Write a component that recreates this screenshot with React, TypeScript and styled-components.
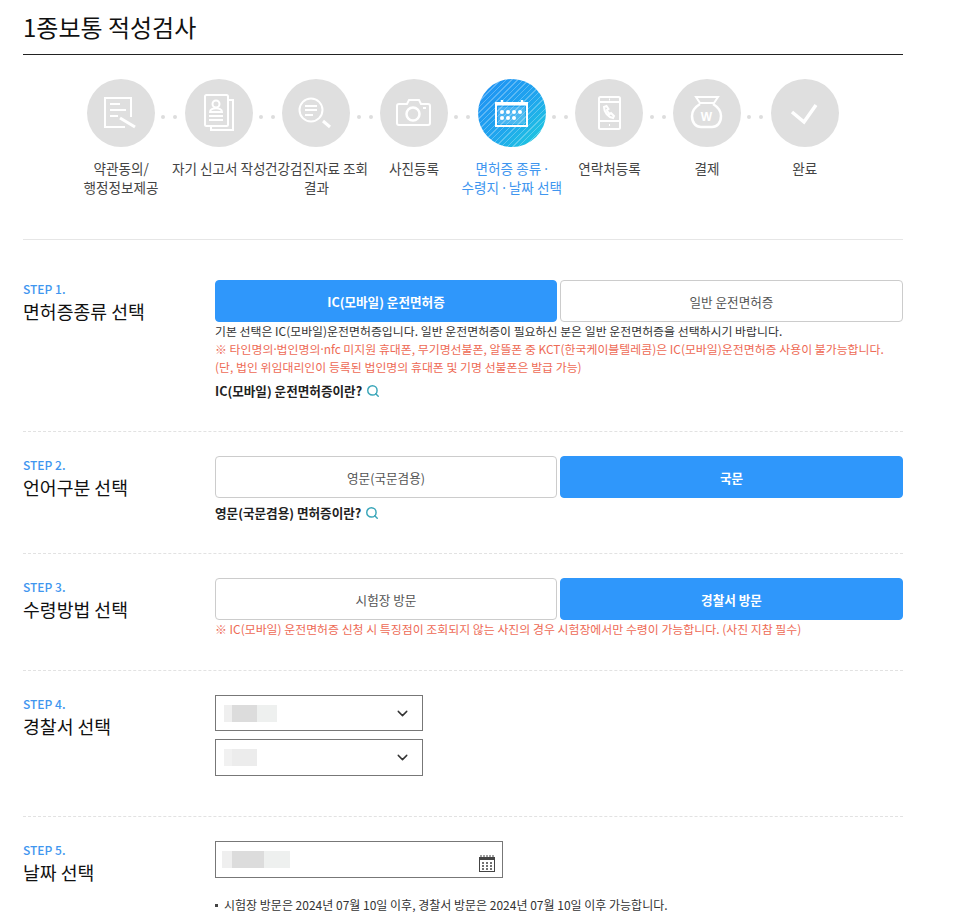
import { FC, ReactNode } from 'react';
import styled, { createGlobalStyle } from 'styled-components';
import { ChevronDown, Search } from 'lucide-react';

const GlobalStyle = createGlobalStyle`
  html, body {
    margin: 0;
    padding: 0;
    background: #fff;
    font-family: "Noto Sans CJK KR", "Noto Sans", sans-serif;
    color: #333;
  }
  * { box-sizing: border-box; }
`;

const Page = styled.div`
  width: 953px;
  height: 916px;
  overflow: hidden;
  padding: 0 50px 0 23px;
`;
const Title = styled.h1`
  margin: 0;
  height: 55px;
  padding-top: 9px;
  font-size: 24px;
  line-height: 36px;
  font-weight: 400;
  color: #111;
  border-bottom: 1px solid #222;
`;
const StepList = styled.ul`
  display: flex;
  list-style: none;
  margin: 0;
  padding: 24px 0 0 49.3px;
  height: 185px;
  border-bottom: 1px solid #e6e6e6;
`;
const StepItem = styled.li<{ $last?: boolean }>`
  position: relative;
  width: 97.67px;
  flex: none;
  display: flex;
  flex-direction: column;
  align-items: center;
  &::after {
    content: '';
    display: ${(p) => (p.$last ? 'none' : 'block')};
    position: absolute;
    left: 89px;
    top: 36px;
    width: 4px;
    height: 4px;
    border-radius: 50%;
    background: #ddd;
    box-shadow: 12px 0 0 #ddd;
  }
`;
const Circle = styled.div<{ $active?: boolean }>`
  width: 68px;
  height: 68px;
  border-radius: 50%;
  flex: none;
  background: ${(p) =>
    p.$active
      ? `repeating-linear-gradient(135deg, rgba(255,255,255,0.28) 0 1px, transparent 1px 4px),
         linear-gradient(135deg, #1f8ff5 0%, #1fa5ee 55%, #1fd0dc 100%)`
      : '#dfdfdf'};
`;
const StepLabel = styled.div<{ $active?: boolean }>`
  margin-top: 12px;
  width: 130px;
  flex: none;
  text-align: center;
  font-size: 13.6px;
  line-height: 19px;
  white-space: pre;
  color: ${(p) => (p.$active ? '#3f96ef' : '#444')};
`;
const Mid = styled.span`
  font-family: "Noto Sans", sans-serif;
`;
const Section = styled.section<{ $top?: number; $last?: boolean }>`
  display: flex;
  padding: ${(p) => p.$top ?? 24}px 0 0;
  border-bottom: ${(p) => (p.$last ? 'none' : '1px dashed #e2e2e2')};
`;
const Head = styled.div`
  width: 192px;
  flex: none;
`;
const StepNo = styled.div`
  font-size: 12px;
  line-height: 18px;
  font-weight: 500;
  color: #3f96ef;
`;
const StepName = styled.div`
  font-size: 18.3px;
  line-height: 26px;
  color: #111;
`;
const Body = styled.div<{ $height: number }>`
  width: 688px;
  height: ${(p) => p.$height}px;
`;
const ButtonRow = styled.div`
  display: grid;
  grid-template-columns: 342px 343px;
  gap: 3px;
`;
const Choice = styled.button<{ $on?: boolean }>`
  height: 42px;
  padding: 0;
  border-radius: 4px;
  font-family: inherit;
  font-size: 12.6px;
  font-weight: ${(p) => (p.$on ? 700 : 400)};
  color: ${(p) => (p.$on ? '#fff' : '#555')};
  background: ${(p) => (p.$on ? '#2f97fb' : '#fff')};
  border: 1px solid ${(p) => (p.$on ? '#2f97fb' : '#ccc')};
`;
const Note = styled.p<{ $red?: boolean }>`
  margin: 0;
  font-size: 11.92px;
  line-height: 18px;
  white-space: nowrap;
  color: ${(p) => (p.$red ? '#ee6a55' : '#333')};
`;
const InfoLink = styled.div`
  display: flex;
  align-items: center;
  gap: 4px;
  margin-top: 6px;
  font-size: 12.6px;
  line-height: 18px;
  font-weight: 700;
  color: #222;
  svg { color: #3aa6b9; }
`;
const SelectBox = styled.div<{ $w: number; $h: number; $left: number; $right: number }>`
  display: flex;
  align-items: center;
  justify-content: space-between;
  width: ${(p) => p.$w}px;
  height: ${(p) => p.$h}px;
  margin-bottom: 8px;
  padding: 0 ${(p) => p.$right}px 0 ${(p) => p.$left}px;
  border: 1px solid #777;
  background: #fff;
  color: #333;
`;
const Blur = styled.span<{ $w: number; $light?: boolean }>`
  display: block;
  width: ${(p) => p.$w}px;
  height: 17px;
  background: ${(p) =>
    p.$light
      ? 'linear-gradient(90deg, #f1f1f1 0 24%, #ececec 24% 100%)'
      : 'linear-gradient(90deg, #efefef 0 15%, #dcdcdc 15% 62%, #eef0ef 62% 100%)'};
`;
const BulletLine = styled.div`
  display: flex;
  align-items: center;
  gap: 6px;
  margin-top: 18px;
  font-size: 12px;
  line-height: 18px;
  color: #333;
  white-space: nowrap;
  &::before {
    content: '';
    width: 3px;
    height: 3px;
    background: #444;
  }
`;
const CalendarSvg = styled.svg`
  margin-top: 8px;
`;
const BagWon = styled.text`
  font-family: "Liberation Sans", sans-serif;
  font-size: 12px;
  font-weight: 700;
  fill: #fff;
  stroke: none;
`;

const Glyph: FC<{ children: ReactNode }> = ({ children }) => (
  <svg width="68" height="68" viewBox="0 0 68 68" fill="none" stroke="#fff" strokeWidth="2">
    {children}
  </svg>
);

const icons: ReactNode[] = [
  <Glyph key="terms">
    <path d="M44 38V19H18v29h20" />
    <path d="M23 25h10M23 31h16M23 37h8" />
    <path d="M33 39l15 9" strokeWidth="3" />
  </Glyph>,
  <Glyph key="report">
    <rect x="20" y="16" width="23" height="31" rx="1.500" />
    <path d="M43 21h5v30H26v-4" />
    <circle cx="31" cy="25" r="3.500" />
    <path d="M25 33c0-5 12-5 12 0zM24 37h14M24 41h14" />
  </Glyph>,
  <Glyph key="health">
    <circle cx="29" cy="31" r="11.500" />
    <path d="M23 27h12M23 31h12M23 36h8" />
    <path d="M41 42l7 6" strokeWidth="3" />
  </Glyph>,
  <Glyph key="photo">
    <path d="M19 25h8l2-4h10l2 4h7a2 2 0 0 1 2 2v17a2 2 0 0 1-2 2H19a2 2 0 0 1-2-2V27a2 2 0 0 1 2-2z" />
    <circle cx="33" cy="35" r="6.5" strokeWidth="2.5" />
    <path d="M43 29h3" />
  </Glyph>,
  <Glyph key="calendar">
    <rect x="18" y="24" width="31" height="23" />
    <path d="M17 25h33" strokeWidth="3" />
    <path d="M24 21v3M44 21v3" strokeWidth="2.5" />
    <rect x="20" y="28" width="27" height="17" fill="#fff" fillOpacity="0.2" stroke="none" />
    <g fill="#fff" stroke="none">
      {[24, 30, 36, 42].map((x) => (
        <circle key={`a${x}`} cx={x} cy="33" r="2" />
      ))}
      {[24, 30, 36].map((x) => (
        <circle key={`b${x}`} cx={x} cy="39" r="2" />
      ))}
    </g>
  </Glyph>,
  <Glyph key="phone">
    <rect x="24" y="18" width="21" height="32" rx="1.5" />
    <path d="M24 23h21M24 42h21" />
    <path d="M34 20.500h1M34 46h1" />
    <path d="M29 28c0 5 4 10 9 11l1-2-3-3-1.500 1c-1-1-2-2-2.500-4l1.500-1-2-3z" />
  </Glyph>,
  <Glyph key="pay">
    <path d="M23 18h22l-4 6H27z" />
    <path d="M27 25c-5 3-8 7-8 12 0 7 4 11 9 11h11c5 0 9-4 9-11 0-5-3-9-8-12" strokeWidth="2.5" />
    <BagWon x="33.500" y="41.500" textAnchor="middle">
      W
    </BagWon>
  </Glyph>,
  <Glyph key="done">
    <path d="M21 33l12 10 12-17" strokeWidth="3.500" />
  </Glyph>,
];

const steps: ReactNode[] = [
  '약관동의/\n행정정보제공',
  '자기 신고서 작성',
  '건강검진자료 조회\n결과',
  '사진등록',
  <>
    면허증 종류 <Mid>·</Mid>
    {'\n'}수령지 <Mid>·</Mid> 날짜 선택
  </>,
  '연락처등록',
  '결제',
  '완료',
];

const CalendarMark: FC = () => (
  <CalendarSvg width="18" height="17" viewBox="0 0 18 17">
    <path d="M1 2h16v3H1z" fill="#444" />
    <path d="M3 0v3M6 0v3M9 0v3M12 0v3M15 0v3" stroke="#444" />
    <rect x="1.500" y="4.500" width="15" height="12" fill="none" stroke="#444" />
    <path d="M4 8h2M8 8h2M12 8h2M4 11h2M8 11h2M12 11h2M4 14h2M8 14h2M12 14h2" stroke="#444" strokeWidth="1.500" />
  </CalendarSvg>
);

const App: FC = () => (
  <Page>
    <GlobalStyle />
    <Title>1종보통 적성검사</Title>
    <StepList>
      {steps.map((label, i) => (
        <StepItem key={i} $last={i === steps.length - 1}>
          <Circle $active={i === 4}>{icons[i]}</Circle>
          <StepLabel $active={i === 4}>{label}</StepLabel>
        </StepItem>
      ))}
    </StepList>

    <Section $top={40}>
      <Head>
        <StepNo>STEP 1.</StepNo>
        <StepName>면허증종류 선택</StepName>
      </Head>
      <Body $height={151}>
        <ButtonRow>
          <Choice $on>IC(모바일) 운전면허증</Choice>
          <Choice>일반 운전면허증</Choice>
        </ButtonRow>
        <Note>기본 선택은 IC(모바일)운전면허증입니다. 일반 운전면허증이 필요하신 분은 일반 운전면허증을 선택하시기 바랍니다.</Note>
        <Note $red>
          ※ 타인명의<Mid>·</Mid>법인명의<Mid>·</Mid>nfc 미지원 휴대폰, 무기명선불폰, 알뜰폰 중 KCT(한국케이블텔레콤)은 IC(모바일)운전면허증 사용이 불가능합니다.
        </Note>
        <Note $red>(단, 법인 위임대리인이 등록된 법인명의 휴대폰 및 기명 선불폰은 발급 가능)</Note>
        <InfoLink>
          IC(모바일) 운전면허증이란?
          <Search size={14} strokeWidth={2.5} />
        </InfoLink>
      </Body>
    </Section>

    <Section>
      <Head>
        <StepNo>STEP 2.</StepNo>
        <StepName>언어구분 선택</StepName>
      </Head>
      <Body $height={97}>
        <ButtonRow>
          <Choice>영문(국문겸용)</Choice>
          <Choice $on>국문</Choice>
        </ButtonRow>
        <InfoLink>
          영문(국문겸용) 면허증이란?
          <Search size={14} strokeWidth={2.5} />
        </InfoLink>
      </Body>
    </Section>

    <Section>
      <Head>
        <StepNo>STEP 3.</StepNo>
        <StepName>수령방법 선택</StepName>
      </Head>
      <Body $height={92}>
        <ButtonRow>
          <Choice>시험장 방문</Choice>
          <Choice $on>경찰서 방문</Choice>
        </ButtonRow>
        <Note $red>※ IC(모바일) 운전면허증 신청 시 특징점이 조회되지 않는 사진의 경우 시험장에서만 수령이 가능합니다. (사진 지참 필수)</Note>
      </Body>
    </Section>

    <Section>
      <Head>
        <StepNo>STEP 4.</StepNo>
        <StepName>경찰서 선택</StepName>
      </Head>
      <Body $height={121}>
        <SelectBox $w={208} $h={36} $left={8} $right={11}>
          <Blur $w={53} />
          <ChevronDown size={17} strokeWidth={2} />
        </SelectBox>
        <SelectBox $w={208} $h={37} $left={8} $right={11}>
          <Blur $w={33} $light />
          <ChevronDown size={17} strokeWidth={2} />
        </SelectBox>
      </Body>
    </Section>

    <Section $last>
      <Head>
        <StepNo>STEP 5.</StepNo>
        <StepName>날짜 선택</StepName>
      </Head>
      <Body $height={80}>
        <SelectBox $w={288} $h={37} $left={6} $right={6}>
          <Blur $w={68} />
          <CalendarMark />
        </SelectBox>
        <BulletLine>시험장 방문은 2024년 07월 10일 이후, 경찰서 방문은 2024년 07월 10일 이후 가능합니다.</BulletLine>
      </Body>
    </Section>
  </Page>
);

export default App;
